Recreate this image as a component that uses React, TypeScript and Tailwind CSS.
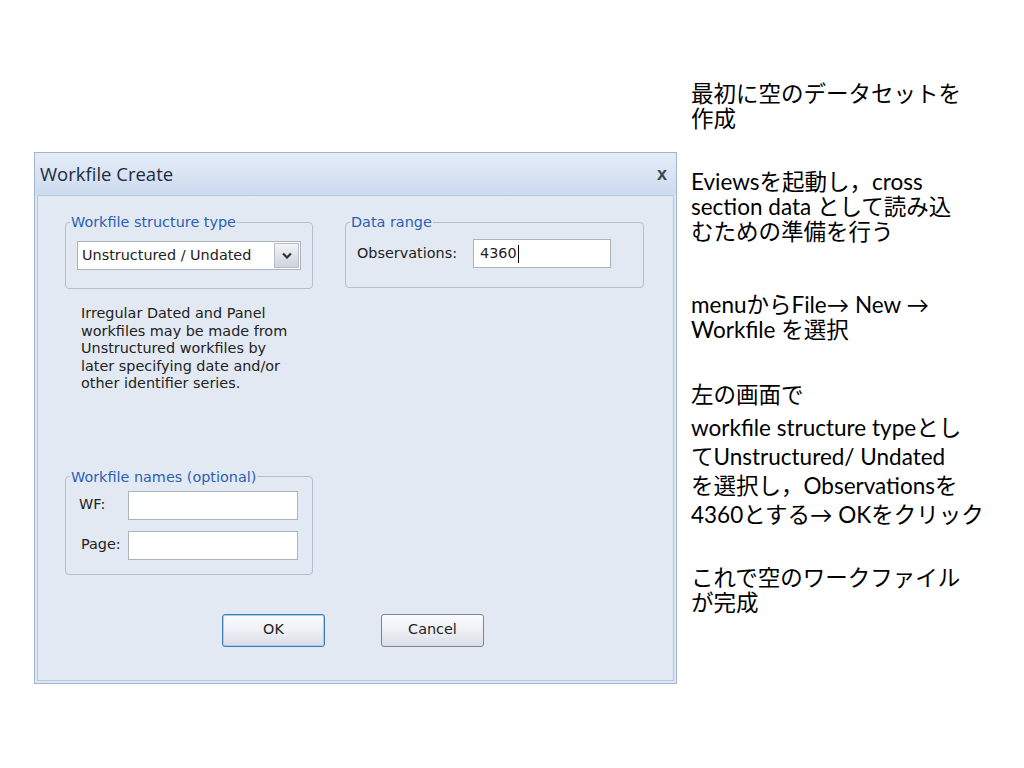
import { FC, ReactNode } from "react";

const dlgFont = { fontFamily: '"DejaVu Sans", Tahoma, sans-serif' };

type GroupProps = { title: string; className?: string; innerClass?: string; children: ReactNode };

const GroupBox: FC<GroupProps> = ({ title, className, innerClass, children }) => (
  <fieldset className={`rounded-[4px] border border-[#b4bfce] ${className ?? ""}`}>
    <legend className="ml-[4px] px-[1px] text-[14.4px] leading-[16px] text-[#2b5fb4]">{title}</legend>
    <div className={innerClass}>{children}</div>
  </fieldset>
);

const TextBox: FC<{ value?: string; className?: string }> = ({ value, className }) => (
  <div
    className={`flex h-[29px] items-center border border-[#abb3bf] bg-white pl-[6px] text-[14.4px] text-[#222] ${className ?? ""}`}
  >
    {value}
    {value && <span className="ml-[1px] inline-block h-[18px] w-[1px] bg-black" />}
  </div>
);

const DialogButton: FC<{ label: string; primary?: boolean }> = ({ label, primary }) => (
  <button
    className={`h-[33px] w-[103px] rounded-[3px] border bg-gradient-to-b from-[#fbfbfd] via-[#eef0f5] to-[#d9dde6] text-[14.4px] text-[#222] ${
      primary ? "border-[#3d7bb5] shadow-[inset_0_0_0_1px_#a9cdea]" : "border-[#7d8592]"
    }`}
  >
    {label}
  </button>
);

const WorkfileDialog: FC = () => (
  <div className="flex h-[532px] w-[643px] flex-col border border-[#a2b5d2] bg-[#dbe5f3]" style={dlgFont}>
    <div className="flex h-[42px] shrink-0 items-center justify-between bg-gradient-to-b from-[#e4ecf8] to-[#cddbef] pl-[5px] pr-[9px]">
      <span className="text-[18.5px] text-[#1e2b3d]" style={{ fontFamily: '"Open Sans", "Noto Sans", sans-serif' }}>
        Workfile Create
      </span>
      <span className="text-[18px] font-bold leading-none text-[#3c4656]" style={{ fontFamily: '"Liberation Sans", Arial, sans-serif' }}>
        x
      </span>
    </div>
    <div className="mx-[2px] mb-[2px] flex flex-1 flex-col border border-[#b7c7de] bg-[#e3e9f2] pl-[27px] pt-[18px]">
      <div className="flex items-start gap-[32px]">
        <GroupBox title="Workfile structure type" className="h-[75px] w-[248px]" innerClass="px-[11px] pt-[11px]">
          <div className="flex h-[29px] items-center border border-[#abb3bf] bg-white pl-[4px] pr-[1px]">
            <span className="flex-1 text-[14.4px] text-[#222]">Unstructured / Undated</span>
            <span className="flex h-[25px] w-[25px] items-center justify-center border border-[#b7bcc6] bg-gradient-to-b from-[#f2f3f6] to-[#cfd3db]">
              <svg width="10" height="7" viewBox="0 0 10 7">
                <path d="M1 1.5 L5 5.5 L9 1.5" fill="none" stroke="#2e3440" strokeWidth="2.2" />
              </svg>
            </span>
          </div>
        </GroupBox>
        <GroupBox title="Data range" className="h-[74px] w-[299px]" innerClass="px-[11px] pt-[9px]">
          <div className="flex items-center">
            <span className="w-[116px] text-[14.4px] text-[#222]">Observations:</span>
            <TextBox value="4360" className="w-[138px]" />
          </div>
        </GroupBox>
      </div>

      <p className="ml-[16px] mt-[16px] text-[14.4px] leading-[17.5px] text-[#222]">
        Irregular Dated and Panel
        <br />
        workfiles may be made from
        <br />
        Unstructured workfiles by
        <br />
        later specifying date and/or
        <br />
        other identifier series.
      </p>

      <GroupBox title="Workfile names (optional)" className="mt-[76px] h-[106px] w-[248px]" innerClass="pl-[13px] pr-[14px] pt-[6px]">
        <div className="flex flex-col gap-[11px]">
          <div className="flex items-center">
            <span className="w-[49px] text-[14.4px] text-[#222]">WF:</span>
            <TextBox className="flex-1" />
          </div>
          <div className="flex items-center">
            <span className="w-[49px] pl-[2px] text-[14.4px] text-[#222]">Page:</span>
            <TextBox className="flex-1" />
          </div>
        </div>
      </GroupBox>

      <div className="ml-[157px] mt-[39px] flex gap-[56px]">
        <DialogButton label="OK" primary />
        <DialogButton label="Cancel" />
      </div>
    </div>
  </div>
);

const Notes: FC = () => (
  <div
    className="whitespace-nowrap text-[22.5px] leading-[25px] text-black"
    style={{ fontFamily: 'Lato, "Noto Sans CJK JP", sans-serif' }}
  >
    <p>最初に空のデータセットを<br />作成</p>
    <p className="mt-[38px]">Eviewsを起動し，cross<br />section data として読み込<br />むための準備を行う</p>
    <p className="mt-[48px]">menuからFile→ New →<br />Workfile を選択</p>
    <p className="mt-[40px]">左の画面で</p>
    <p className="mt-[6px] leading-[29px]">workfile structure typeとし<br />てUnstructured/ Undated<br />を選択し，Observationsを<br />4360とする→ OKをクリック</p>
    <p className="mt-[36px]">これで空のワークファイル<br />が完成</p>
  </div>
);

export default function App() {
  return (
    <div className="flex h-[768px] w-[1024px] items-start bg-white pl-[34px]">
      <div className="mt-[152px]">
        <WorkfileDialog />
      </div>
      <div className="ml-[14px] mt-[81px]">
        <Notes />
      </div>
    </div>
  );
}
